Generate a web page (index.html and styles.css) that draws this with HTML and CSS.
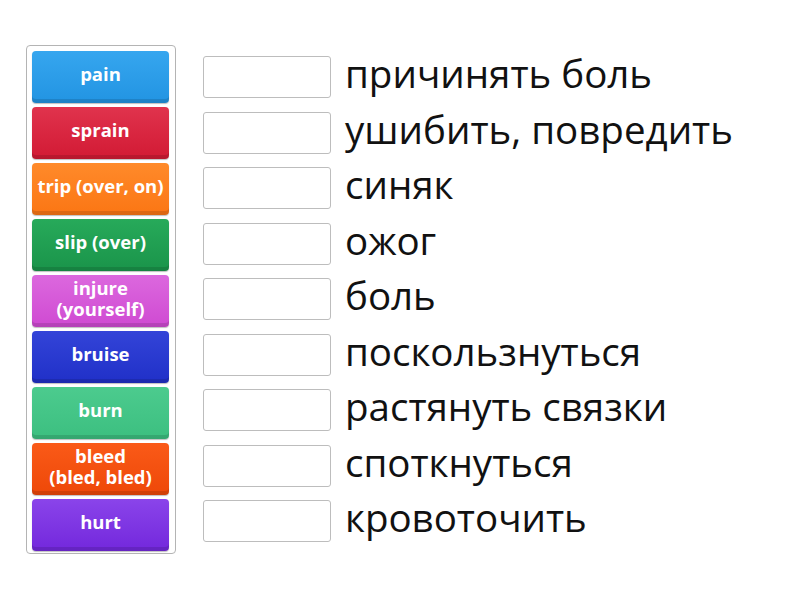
FILE: index.html
```html
<!DOCTYPE html>
<html>
<head>
<meta charset="utf-8">
<link rel="stylesheet" href="styles.css">
</head>
<body>
<div class="page">
  <div class="bank">
    <div class="tile t-blue">pain</div>
    <div class="tile t-red">sprain</div>
    <div class="tile t-orange">trip (over, on)</div>
    <div class="tile t-green">slip (over)</div>
    <div class="tile t-pink">injure<br>(yourself)</div>
    <div class="tile t-navy">bruise</div>
    <div class="tile t-mint">burn</div>
    <div class="tile t-flame">bleed<br>(bled, bled)</div>
    <div class="tile t-purple">hurt</div>
  </div>
  <div class="targets">
    <div class="row"><div class="slot"></div><span class="word">причинять боль</span></div>
    <div class="row"><div class="slot"></div><span class="word">ушибить, повредить</span></div>
    <div class="row"><div class="slot"></div><span class="word">синяк</span></div>
    <div class="row"><div class="slot"></div><span class="word">ожог</span></div>
    <div class="row"><div class="slot"></div><span class="word">боль</span></div>
    <div class="row"><div class="slot"></div><span class="word">поскользнуться</span></div>
    <div class="row"><div class="slot"></div><span class="word">растянуть связки</span></div>
    <div class="row"><div class="slot"></div><span class="word">споткнуться</span></div>
    <div class="row"><div class="slot"></div><span class="word">кровоточить</span></div>
  </div>
</div>
</body>
</html>
```
FILE: styles.css
```css
html, body {
  margin: 0;
  padding: 0;
  background: #ffffff;
}
body {
  font-family: "Open Sans", "Noto Sans", sans-serif;
  width: 800px;
  height: 600px;
  overflow: hidden;
}
.page {
  display: flex;
  align-items: flex-start;
  padding: 45px 0 0 26px;
}
.bank {
  width: 137px;
  padding: 5px 6px 2px 5px;
  border: 1px solid #b4b4b4;
  border-radius: 4px;
  display: flex;
  flex-direction: column;
  gap: 4px;
}
.tile {
  box-sizing: border-box;
  height: 52px;
  padding-bottom: 7px;
  border-radius: 4px;
  color: #ffffff;
  font-weight: 700;
  font-size: 18.5px;
  line-height: 21px;
  display: flex;
  align-items: center;
  justify-content: center;
  text-align: center;
  white-space: nowrap;
  box-shadow: inset 0 -4px 0 rgba(0,0,0,0.12), 0 1px 1px rgba(0,0,0,0.25);
}
.t-blue { background: linear-gradient(#36a6ef, #2294e2); }
.t-red { background: linear-gradient(#e0334d, #d21a34); }
.t-orange { background: linear-gradient(#ff8a2a, #fb7614); }
.t-green { background: linear-gradient(#27aa5a, #1a944a); }
.t-pink { background: linear-gradient(#dc68de, #cf4ad2); }
.t-navy { background: linear-gradient(#3344d8, #2030c8); }
.t-mint { background: linear-gradient(#4ccb8e, #3cbf80); }
.t-flame { background: linear-gradient(#fa5a18, #ee4808); }
.t-purple { background: linear-gradient(#8a44ea, #7328dc); }
.targets {
  margin-left: 27px;
  padding-top: 11px;
  display: flex;
  flex-direction: column;
  gap: 13.5px;
}
.row {
  display: flex;
  align-items: center;
  height: 42px;
}
.slot {
  width: 126px;
  height: 40px;
  border: 1px solid #bdbdbd;
  border-radius: 3px;
  background: #fff;
  flex: none;
}
.word {
  margin-left: 14px;
  margin-top: -8px;
  font-size: 38.5px;
  color: #111111;
  white-space: nowrap;
  line-height: 42px;
}
```
